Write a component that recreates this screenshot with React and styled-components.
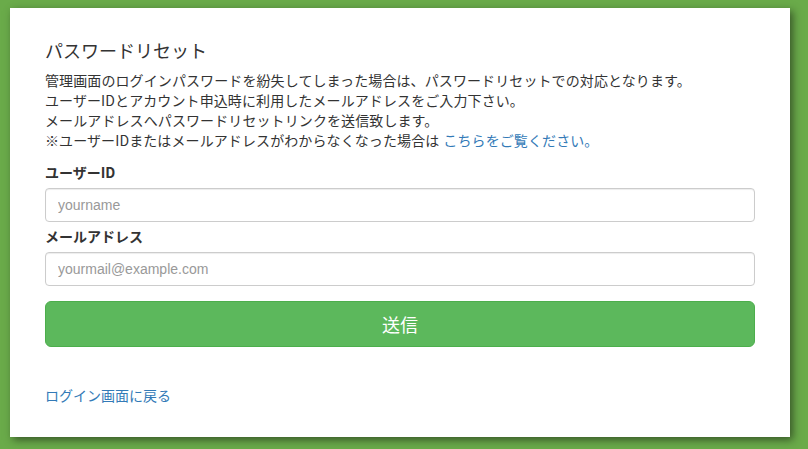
import React from "react";
import styled, { createGlobalStyle } from "styled-components";

const Global = createGlobalStyle`
  html, body { margin: 0; padding: 0; }
  body {
    background: #6aab4a;
    font-family: "Noto Sans CJK JP", "Liberation Sans", sans-serif;
    color: #333;
    width: 808px;
    height: 449px;
    overflow: hidden;
  }
`;

const Page = styled.div`
  padding: 8px 18px 0 10px;
`;

const Card = styled.div`
  width: 780px;
  height: 429px;
  box-sizing: border-box;
  background: #fff;
  padding: 30px 35px 0 35px;
  box-shadow: 3px 3px 8px rgba(40, 60, 30, 0.75);
  display: flex;
  flex-direction: column;
`;

const Title = styled.h2`
  margin: 0;
  font-size: 18px;
  font-weight: 400;
  line-height: 24px;
  color: #333;
`;

const Lead = styled.p`
  margin: 8px 0 0 0;
  font-size: 14px;
  line-height: 20px;
  letter-spacing: 0.1px;
`;

const Link = styled.a`
  color: #337ab7;
  text-decoration: none;
  margin-left: ${(p) => (p.$gap ? "4px" : "0")};
`;

const Label = styled.label`
  display: block;
  font-size: 14px;
  font-weight: 700;
  line-height: 20px;
  margin-top: ${(p) => p.$top}px;
`;

const Input = styled.input`
  display: block;
  width: 100%;
  box-sizing: border-box;
  height: 34px;
  margin-top: 6px;
  padding: 6px 12px;
  border: 1px solid #ccc;
  border-radius: 4px;
  font-family: "Liberation Sans", "Noto Sans CJK JP", sans-serif;
  font-size: 14px;
  color: #555;
  outline: none;
  box-shadow: inset 0 1px 1px rgba(0, 0, 0, 0.075);
  &::placeholder { color: #999; }
`;

const Button = styled.button`
  display: block;
  width: 100%;
  height: 46px;
  margin-top: 15px;
  background: #5cb85c;
  border: 1px solid #4cae4c;
  border-radius: 6px;
  color: #fff;
  font-family: "Noto Sans CJK JP", sans-serif;
  font-size: 18px;
  line-height: 24px;
  cursor: pointer;
`;

const Footer = styled.div`
  margin-top: 38px;
  font-size: 14px;
  line-height: 20px;
`;

export default function App() {
  return (
    <>
      <Global />
      <Page>
        <Card>
          <Title>パスワードリセット</Title>
          <Lead>
            管理画面のログインパスワードを紛失してしまった場合は、パスワードリセットでの対応となります。
            <br />
            ユーザーIDとアカウント申込時に利用したメールアドレスをご入力下さい。
            <br />
            メールアドレスへパスワードリセットリンクを送信致します。
            <br />
            ※ユーザーIDまたはメールアドレスがわからなくなった場合は
            <Link href="#" $gap>こちらをご覧ください。</Link>
          </Lead>
          <Label $top={12}>ユーザーID</Label>
          <Input placeholder="yourname" />
          <Label $top={4}>メールアドレス</Label>
          <Input placeholder="yourmail@example.com" />
          <Button>送信</Button>
          <Footer>
            <Link href="#">ログイン画面に戻る</Link>
          </Footer>
        </Card>
      </Page>
    </>
  );
}
